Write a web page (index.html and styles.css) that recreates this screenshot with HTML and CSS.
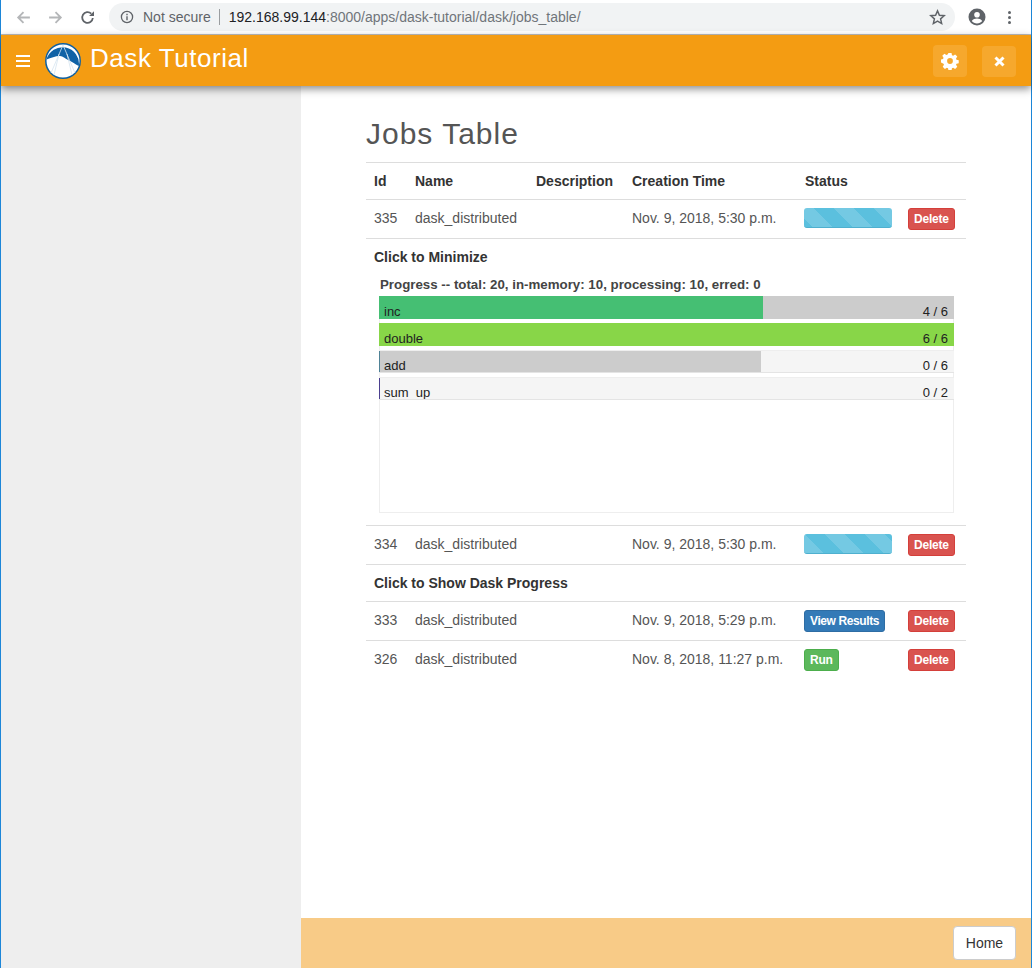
FILE: index.html
```html
<!DOCTYPE html>
<html>
<head>
  <meta charset="utf-8">
  <title>Jobs Table</title>
  <link rel="stylesheet" href="styles.css">
</head>
<body>
  <div class="window">
    <!-- browser bar -->
    <div class="browser-bar">
      <svg class="nav-icon" viewBox="0 0 16 16"><path d="M14 8H3M8 3L3 8l5 5" fill="none" stroke="#b4b6b8" stroke-width="1.7"/></svg>
      <svg class="nav-icon" viewBox="0 0 16 16"><path d="M2 8h11M8 3l5 5-5 5" fill="none" stroke="#b4b6b8" stroke-width="1.7"/></svg>
      <svg class="nav-icon" viewBox="0 0 16 16"><path d="M13 8.5A5 5 0 1 1 11.5 4.4" fill="none" stroke="#5f6368" stroke-width="1.7"/><path d="M9.5 6.6h4.6V2z" fill="#5f6368"/></svg>
      <div class="omnibox">
        <svg class="info-icon" viewBox="0 0 14 14"><circle cx="7" cy="7" r="5.6" fill="none" stroke="#5f6368" stroke-width="1.3"/><path d="M6.3 6.2h1.4v4H6.3zM6.3 3.8h1.4v1.4H6.3z" fill="#5f6368"/></svg>
        <span class="not-secure">Not secure</span>
        <span class="url"><b>192.168.99.144</b>:8000/apps/dask-tutorial/dask/jobs_table/</span>
        <svg class="star-icon" viewBox="0 0 16 16"><path d="M8 1.8l1.8 4.1 4.5.4-3.4 3 1 4.4L8 11.4l-3.9 2.3 1-4.4-3.4-3 4.5-.4z" fill="none" stroke="#5f6368" stroke-width="1.4"/></svg>
      </div>
      <svg class="account-icon" viewBox="0 0 18 18"><circle cx="9" cy="9" r="8.5" fill="#5f6368"/><circle cx="9" cy="6.8" r="2.8" fill="#fff"/><path d="M3.8 13c1.2-2 3.3-2.6 5.2-2.6s4 .6 5.200 2.600c-1.200 1.500-3 2.400-5.200 2.400s-4-.9-5.200-2.400z" fill="#fff"/></svg>
      <div class="menu-dots"><i></i><i></i><i></i></div>
    </div>

    <!-- app header -->
    <header class="app-header">
      <div class="hamburger"><i></i><i></i><i></i></div>
      <svg class="logo" viewBox="0 0 36 36">
        <circle cx="18" cy="18" r="17.200" fill="#fff" stroke="#0f5f9f" stroke-width="1.500"/>
        <path d="M1.500 16.500A16.500 16.500 0 0 1 33.800 23C30 21 26.500 18.500 23 17c-3-1.300-5-3.800-8-4-4-.2-9 2-13.500 3.500z" fill="#0f62a6"/>
        <path d="M6 30L18 2l12 28M14 11L9 32M22 11l5 21" fill="none" stroke="#d5e4f0" stroke-width=".8"/>
      </svg>
      <div class="app-title">Dask Tutorial</div>
      <div class="header-buttons">
        <button class="header-btn">
          <svg viewBox="0 0 18 18" width="18" height="18"><path fill-rule="evenodd" fill="#fff" d="M7.300 0h3.400l.5 2.500 1.300.6 2.200-1.400 2.400 2.400-1.400 2.200.5 1.300 2.500.5v3.400l-2.500.5-.5 1.300 1.400 2.200-2.400 2.400-2.200-1.400-1.300.5-.5 2.500H7.300l-.5-2.500-1.300-.5-2.200 1.400-2.400-2.400 1.400-2.200-.5-1.300L-1 10.700V7.300l2.300-.5.5-1.300L.4 3.300l2.400-2.400L5 2.300l1.300-.5zM9 5.800a3.200 3.200 0 1 0 0 6.400 3.200 3.200 0 0 0 0-6.400z" transform="translate(.9 .9) scale(.9)"/></svg>
        </button>
        <button class="header-btn close-btn">
          <svg viewBox="0 0 11 11" width="11" height="11"><path d="M1.500 1.500l8 8M9.500 1.500l-8 8" stroke="#fff" stroke-width="3"/></svg>
        </button>
      </div>
    </header>

    <div class="main">
      <aside class="sidebar"></aside>
      <div class="content-col">
        <div class="content">
          <h1 class="page-title">Jobs Table</h1>
          <table class="jobs-table">
            <thead>
              <tr>
                <th class="col-id">Id</th>
                <th class="col-name">Name</th>
                <th class="col-desc">Description</th>
                <th class="col-time">Creation Time</th>
                <th class="col-status">Status</th>
                <th class="col-action"></th>
              </tr>
            </thead>
            <tbody>
              <tr>
                <td>335</td><td>dask_distributed</td><td></td><td>Nov. 9, 2018, 5:30 p.m.</td>
                <td><div class="stripes stripes-a"></div></td>
                <td><button class="btn btn-delete">Delete</button></td>
              </tr>
              <tr>
                <td colspan="6" class="detail-cell">
                  <div class="toggle-label">Click to Minimize</div>
                  <div class="progress-head">Progress -- total: 20, in-memory: 10, processing: 10, erred: 0</div>
                  <div class="progress-panel">
                    <div class="task track-grey">
                      <div class="fill fill-green" style="width: 66.7%"></div>
                      <div class="task-text"><span>inc</span><span>4 / 6</span></div>
                    </div>
                    <div class="task track-grey">
                      <div class="fill fill-lime" style="width: 100%"></div>
                      <div class="task-text"><span>double</span><span>6 / 6</span></div>
                    </div>
                    <div class="task track-light">
                      <div class="fill fill-grey" style="width: 66.5%"></div>
                      <div class="task-text"><span>add</span><span>0 / 6</span></div>
                    </div>
                    <div class="task track-light track-sliver">
                      <div class="task-text"><span>sum_up</span><span>0 / 2</span></div>
                    </div>
                  </div>
                </td>
              </tr>
              <tr>
                <td>334</td><td>dask_distributed</td><td></td><td>Nov. 9, 2018, 5:30 p.m.</td>
                <td><div class="stripes stripes-b"></div></td>
                <td><button class="btn btn-delete">Delete</button></td>
              </tr>
              <tr>
                <td colspan="6" class="toggle-cell">Click to Show Dask Progress</td>
              </tr>
              <tr>
                <td>333</td><td>dask_distributed</td><td></td><td>Nov. 9, 2018, 5:29 p.m.</td>
                <td><button class="btn btn-results">View Results</button></td>
                <td><button class="btn btn-delete">Delete</button></td>
              </tr>
              <tr>
                <td>326</td><td>dask_distributed</td><td></td><td>Nov. 8, 2018, 11:27 p.m.</td>
                <td><button class="btn btn-run">Run</button></td>
                <td><button class="btn btn-delete">Delete</button></td>
              </tr>
            </tbody>
          </table>
        </div>
        <footer class="app-footer">
          <button class="home-btn">Home</button>
        </footer>
      </div>
    </div>
  </div>
</body>
</html>
```

FILE: styles.css
```css
* {
  box-sizing: border-box;
}

html, body {
  height: 100%;
  margin: 0;
  overflow: hidden;
}

body {
  font-family: "Liberation Sans", Arial, sans-serif;
  font-size: 14px;
  color: #333;
  background: #fff;
}

button {
  font-family: inherit;
}

.window {
  display: flex;
  flex-direction: column;
  height: 968px;
  border-left: 1px solid #1c86d8;
  border-right: 1px solid #1c86d8;
}

/* browser bar */
.browser-bar {
  display: flex;
  align-items: center;
  height: 35px;
  padding: 0 0 0 14px;
  background: #fff;
  border-bottom: 1px solid #bdbdbd;
}

.nav-icon {
  width: 17px;
  height: 17px;
  margin-right: 15px;
}

.omnibox {
  display: flex;
  align-items: center;
  width: 846px;
  height: 28px;
  margin-left: -2px;
  padding: 0 9px 0 11px;
  background: #f1f3f4;
  border-radius: 14px;
}

.info-icon {
  width: 14px;
  height: 14px;
  margin-right: 9px;
}

.not-secure {
  padding-right: 8px;
  font-size: 14px;
  color: #5f6368;
  border-right: 1px solid #9a9da0;
  line-height: 16px;
}

.url {
  margin-left: 9px;
  font-size: 14px;
  color: #70757a;
}

.url b {
  font-weight: normal;
  color: #202124;
}

.star-icon {
  width: 17px;
  height: 17px;
  margin-left: auto;
}

.account-icon {
  width: 18px;
  height: 18px;
  margin-left: 13px;
}

.menu-dots {
  display: flex;
  flex-direction: column;
  gap: 2px;
  margin-left: 22px;
}

.menu-dots i {
  display: block;
  width: 3px;
  height: 3px;
  border-radius: 50%;
  background: #5f6368;
}

/* app header */
.app-header {
  position: relative;
  z-index: 2;
  display: flex;
  align-items: center;
  flex: none;
  height: 51px;
  background: #f49c12;
  box-shadow: 0 3px 8px rgba(0, 0, 0, .45);
}

.hamburger {
  display: flex;
  flex-direction: column;
  gap: 3px;
  margin-left: 15px;
  margin-top: 1px;
}

.hamburger i {
  display: block;
  width: 14px;
  height: 2px;
  background: #fff;
}

.logo {
  width: 36px;
  height: 36px;
  margin-left: 15px;
}

.app-title {
  margin-left: 9px;
  margin-top: -4px;
  font-size: 26px;
  letter-spacing: .55px;
  color: #fff;
}

.header-buttons {
  display: flex;
  align-items: flex-end;
  gap: 15px;
  margin-left: auto;
  margin-right: 15px;
}

.header-btn {
  display: flex;
  align-items: center;
  justify-content: center;
  width: 34px;
  height: 32px;
  padding: 0;
  border: 0;
  border-radius: 4px;
  background: #f6a82d;
}

.close-btn {
  height: 31px;
}

/* page */
.main {
  display: flex;
  flex: 1;
  min-height: 0;
}

.sidebar {
  flex: none;
  width: 300px;
  background: #eee;
}

.content-col {
  display: flex;
  flex-direction: column;
  flex: 1;
}

.content {
  flex: 1;
  padding: 29px 0 0 65px;
}

.page-title {
  margin: 0 0 9px;
  font-size: 30px;
  font-weight: normal;
  line-height: 38px;
  letter-spacing: 1px;
  color: #555;
}

.jobs-table {
  width: 600px;
  table-layout: fixed;
  border-collapse: collapse;
  color: #555;
}

.jobs-table th,
.jobs-table td {
  padding: 0 8px 2px;
  height: 39px;
  text-align: left;
  border-top: 1px solid #ddd;
  vertical-align: middle;
}

.jobs-table th {
  height: 37px;
  padding-bottom: 0;
  color: #333;
  font-weight: bold;
}

.col-id { width: 41px; }
.col-name { width: 121px; }
.col-desc { width: 96px; }
.col-time { width: 172px; }
.col-status { width: 104px; }
.col-action { width: 66px; }

.jobs-table .col-status {
  padding-left: 9px;
}

.stripes {
  width: 88px;
  height: 20px;
  border-radius: 3px;
  border-bottom: 1px solid #4fb0cf;
}

.stripes-a {
  background: repeating-linear-gradient(45deg, #5bc0de 0 6.1px, #74c9e3 6.1px 20.3px, #5bc0de 20.3px 28.28px);
}

.stripes-b {
  background: repeating-linear-gradient(45deg, #74c9e3 0 13.7px, #5bc0de 13.7px 27.8px, #74c9e3 27.8px 28.28px);
}

.btn {
  display: block;
  height: 22px;
  margin-top: 2px;
  padding: 0 5px;
  border: 1px solid transparent;
  border-radius: 3px;
  font-size: 12px;
  font-weight: bold;
  line-height: 20px;
  letter-spacing: -.2px;
  color: #fff;
  white-space: nowrap;
}

.btn-delete {
  background: #d9534f;
  border-color: #d43f3a;
}

.btn-results {
  background: #337ab7;
  border-color: #2e6da4;
  letter-spacing: -.4px;
}

.btn-run {
  background: #5cb85c;
  border-color: #4cae4c;
}

.jobs-table .detail-cell {
  height: 287px;
  padding: 0 12px 12px 8px;
  vertical-align: top;
}

.toggle-label {
  margin-top: 10px;
  font-weight: bold;
  line-height: 17px;
  color: #333;
}

.jobs-table .toggle-cell {
  height: 37px;
  padding-bottom: 0;
  font-weight: bold;
  color: #333;
}

.progress-head {
  margin: 11px 0 3px 6px;
  font-size: 13.3px;
  font-weight: bold;
  line-height: 16px;
  color: #444;
}

.progress-panel {
  display: flex;
  flex-direction: column;
  gap: 4px;
  width: 575px;
  height: 217px;
  margin-left: 5px;
  border: 1px solid #eee;
  border-top: 0;
}

.task {
  display: grid;
  flex: none;
  height: 23px;
  margin: 0 -1px;
  border-bottom: 1px solid #e4e4e4;
  overflow: hidden;
}

.track-grey {
  background: #ccc;
  border-bottom: 0;
}

.track-light {
  background: #f5f5f5;
  border-top: 1px solid #eee;
}

.track-sliver {
  box-shadow: inset 1px 0 0 #4b3f8f;
}

.fill,
.task-text {
  grid-area: 1 / 1;
}

.fill-green { background: #45bf73; }
.fill-lime { background: #88d648; }
.fill-grey {
  background: #ccc;
  box-shadow: inset 1px 0 0 #4f8296;
}

.task-text {
  display: flex;
  justify-content: space-between;
  align-items: flex-end;
  padding: 0 6px 0 5px;
  font-size: 13px;
  line-height: 15px;
  color: #222;
}

.track-light .task-text {
  margin-bottom: -1px;
}

/* footer */
.app-footer {
  display: flex;
  justify-content: flex-end;
  align-items: center;
  flex: none;
  height: 50px;
  padding-right: 15px;
  background: #f8cb87;
}

.home-btn {
  width: 63px;
  height: 34px;
  margin-top: -1px;
  border: 1px solid #ccc;
  border-radius: 4px;
  background: #fff;
  font-size: 14px;
  color: #333;
}
```
